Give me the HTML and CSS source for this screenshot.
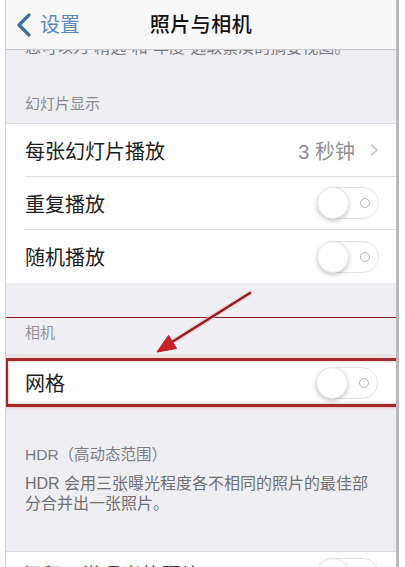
FILE: index.html
```html
<!DOCTYPE html>
<html lang="zh-CN">
<head>
<meta charset="utf-8">
<title>照片与相机</title>
<link rel="stylesheet" href="styles.css">
</head>
<body>
<div class="frame">
  <header class="nav">
    <div class="nav-back">
      <svg class="chev" width="16" height="24" viewBox="0 0 16 24"><path d="M13 2 L3 12 L13 22" fill="none" stroke="#3d6e9e" stroke-width="3.2" stroke-linecap="round" stroke-linejoin="round"/></svg>
      <span class="back-label">设置</span>
    </div>
    <div class="nav-title">照片与相机</div>
    <div class="nav-side"></div>
  </header>
  <main class="content">
    <p class="cut-desc">您可以为“精选”和“年度”选取紧凑的摘要视图。</p>
    <div class="sec-head first">幻灯片显示</div>
    <div class="group">
      <div class="row"><span class="label">每张幻灯片播放</span><span class="value">3 秒钟</span><svg class="disc" width="10" height="14" viewBox="0 0 10 14"><path d="M2 1.5 L8 7 L2 12.5" fill="none" stroke="#c4c4c8" stroke-width="1.6"/></svg></div>
      <div class="row"><span class="label">重复播放</span><span class="toggle"><span class="knob"></span><span class="ring"></span></span></div>
      <div class="row last"><span class="label">随机播放</span><span class="toggle"><span class="knob"></span><span class="ring"></span></span></div>
    </div>
    <div class="sec-head camera">相机</div>
    <div class="hl-wrap">
      <div class="row hl"><span class="label">网格</span><span class="toggle"><span class="knob"></span><span class="ring"></span></span></div>
    </div>
    <div class="sec-head hdr">HDR（高动态范围）</div>
    <p class="desc">HDR 会用三张曝光程度各不相同的照片的最佳部分合并出一张照片。</p>
    <div class="group">
      <div class="row last peek"><span class="label">保留正常曝光的照片</span><span class="toggle"><span class="knob"></span><span class="ring"></span></span></div>
    </div>
  </main>
  <svg class="arrow" width="405" height="567" viewBox="0 0 405 567">
    <line x1="250" y1="293" x2="172" y2="342" stroke="#f2b6b8" stroke-width="5" stroke-linecap="round" opacity="0.6"/>
    <line x1="250" y1="293" x2="172" y2="342" stroke="#8e1c22" stroke-width="2.4" stroke-linecap="round"/>
    <polygon points="157,352 176.5,348.5 168.5,335.5" fill="#cc1f2a" stroke="#b01d25" stroke-width="1"/>
  </svg>
</div>
</body>
</html>
```

FILE: styles.css
```css
html, body {
  margin: 0;
  padding: 0;
  background: #ffffff;
  height: 567px;
  overflow: hidden;
}
body {
  font-family: "Liberation Sans", "Noto Sans CJK SC", sans-serif;
}
.frame {
  position: relative;
  margin-left: 5px;
  width: 390px;
  height: 567px;
  border-left: 1px solid #cfcfd2;
  border-right: 3px solid #b9b9bc;
  background: #efeff3;
}
.nav {
  height: 49px;
  border-bottom: 1px solid #c9c9cc;
  background: #f8f8f9;
  display: grid;
  grid-template-columns: 1fr auto 1fr;
  align-items: center;
  position: relative;
  z-index: 2;
}
.nav-back {
  display: flex;
  align-items: center;
  padding-left: 10px;
  gap: 8px;
}
.chev { display: block; }
.back-label {
  font-size: 20px;
  color: #5a8ab8;
  line-height: 24px;
}
.nav-title {
  font-size: 20px;
  font-weight: 500;
  color: #111;
  letter-spacing: 0.5px;
  line-height: 24px;
}
.content {
  height: 517px;
  overflow: hidden;
}
.cut-desc {
  margin: -12px 0 0;
  padding: 0 19px;
  font-size: 16px;
  line-height: 20px;
  height: 20px;
  color: #7a7a7f;
  white-space: nowrap;
}
.sec-head {
  font-size: 15px;
  line-height: 20px;
  color: #8a8a8f;
  padding: 0 19px;
}
.sec-head.first { padding-top: 36px; padding-bottom: 9px; }
.sec-head.camera {
  margin-top: 34px;
  border-top: 1px solid #8a2026;
  margin-left: -1px;
  margin-right: -4px;
  padding: 5px 23px 12px 20px;
  color: #95959a;
}
.sec-head.hdr { padding-top: 38px; color: #7d7d82; font-size: 15.5px; }
.desc {
  margin: 9px 0 0;
  padding: 0 19px 37px;
  font-size: 16px;
  line-height: 20px;
  color: #6f6f74;
}
.group {
  background: #fff;
  border-top: 1px solid #dcdce0;
}
.row {
  display: flex;
  align-items: center;
  height: 52px;
  margin-left: 19px;
  padding-right: 17px;
  border-bottom: 1px solid #dedee2;
  background: #fff;
}
.row.last { border-bottom: none; height: 53px; }
.row.peek {
  align-items: flex-start;
  padding-top: 6px;
  margin-left: 15px;
}
.row.peek .label { color: #3a3a3c; line-height: 24px; margin-top: 6px; }
.label {
  flex: 1;
  font-size: 20px;
  color: #1c1c1e;
  white-space: nowrap;
}
.value {
  font-size: 20px;
  color: #8e8e93;
  margin-right: 14px;
}
.disc { display: block; margin-right: 0; }
.toggle {
  box-sizing: border-box;
  width: 62px;
  height: 32px;
  border: 1.5px solid #e4e4e6;
  border-radius: 16px;
  background: #fff;
  display: flex;
  align-items: center;
  justify-content: space-between;
  padding-right: 8px;
  flex: none;
}
.knob {
  box-sizing: border-box;
  width: 32px;
  height: 32px;
  margin-left: -1.5px;
  border-radius: 50%;
  background: #fff;
  border: 1px solid #e8e8ea;
  box-shadow: 0 2px 4px rgba(0,0,0,0.22);
}
.ring {
  box-sizing: border-box;
  width: 10px;
  height: 10px;
  border-radius: 50%;
  border: 1.5px solid #b6b6ba;
}
.hl-wrap {
  border-top: 1px solid #dcdce0;
  padding-top: 2px;
  margin-left: -1px;
  margin-right: -4px;
  background: linear-gradient(#fff, #fff) no-repeat 1px 0 / 390px 100%;
}
.row.hl {
  margin-left: 0;
  height: 49px;
  box-sizing: border-box;
  border: 3px solid #a9262c;
  box-shadow: 0 0 3px rgba(230, 120, 125, 0.7), inset 0 0 3px rgba(230, 120, 125, 0.6);
  padding-left: 17px;
  padding-right: 19px;
}
.arrow {
  position: absolute;
  left: -6px;
  top: 0;
  pointer-events: none;
  z-index: 3;
}
```
